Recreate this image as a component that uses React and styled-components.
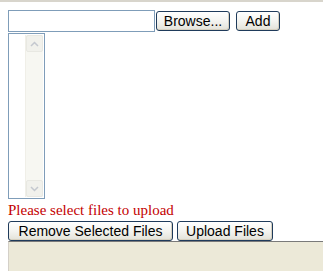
import * as React from 'react';
import styled, { createGlobalStyle } from 'styled-components';

const GlobalStyle = createGlobalStyle`
  html, body {
    margin: 0;
    padding: 0;
    background: #ffffff;
    overflow: hidden;
  }
  body {
    border-top: 2px solid #d8d5cc;
  }
`;

const Page = styled.div`
  padding: 8px 0 0 8px;
  font-family: "Liberation Sans", Arial, sans-serif;
`;

const PickRow = styled.div`
  display: flex;
  align-items: flex-start;
  height: 22px;
`;

const FileInput = styled.div`
  box-sizing: border-box;
  width: 147px;
  height: 22px;
  border: 1px solid #7f9db9;
  background: #fff;
`;

const XpButton = styled.button`
  box-sizing: border-box;
  height: 20px;
  width: ${(p) => p.$w}px;
  margin-left: ${(p) => p.$gap || 0}px;
  margin-top: 1px;
  padding: 0;
  border: 1px solid #1f3b5b;
  border-radius: 3px;
  background: linear-gradient(#ffffff 0%, #f4f4f0 50%, #e3e2d9 100%);
  box-shadow: inset -1px -1px 0 #d6d0c0;
  font-family: "Liberation Sans", Arial, sans-serif;
  font-size: 14px;
  color: #000;
  line-height: 17px;
  text-align: center;
  white-space: nowrap;
`;

const ListBox = styled.div`
  box-sizing: border-box;
  width: 37px;
  height: 166px;
  margin-top: 1px;
  border: 1px solid #7f9db9;
  display: flex;
  justify-content: flex-end;
  padding: 1px;
`;

const Scrollbar = styled.div`
  width: 17px;
  display: flex;
  flex-direction: column;
  background: #f7f7f2;
  border-left: 1px solid #f0efe8;
`;

const ArrowBox = styled.div`
  box-sizing: border-box;
  height: 17px;
  border: 1px solid #e8e8e2;
  border-radius: 2px;
  background: #f1f1ec;
  display: flex;
  align-items: center;
  justify-content: center;
`;

const Track = styled.div`
  flex: 1;
`;

const ErrorText = styled.div`
  font-family: "Liberation Serif", "Times New Roman", serif;
  font-size: 15px;
  color: #c40000;
  height: 18px;
  line-height: 16px;
  margin-top: 3px;
`;

const ActionRow = styled.div`
  display: flex;
  height: 21px;
`;

const Tray = styled.div`
  box-sizing: border-box;
  height: 40px;
  background: #ece9d8;
  border-top: 1px solid #7a7a7a;
  border-left: 1px solid #d4d0c8;
`;

function Arrow({ up }) {
  return (
    <svg width="9" height="6" viewBox="0 0 9 6">
      <path
        d={up ? 'M1 5 L4.5 1.5 L8 5' : 'M1 1 L4.5 4.5 L8 1'}
        fill="none"
        stroke="#c4c8cf"
        strokeWidth="1.5"
      />
    </svg>
  );
}

export default function App() {
  return (
    <Page>
      <GlobalStyle />
      <PickRow>
        <FileInput />
        <XpButton $w={74} $gap={1}>Browse...</XpButton>
        <XpButton $w={44} $gap={6}>Add</XpButton>
      </PickRow>
      <ListBox>
        <Scrollbar>
          <ArrowBox><Arrow up /></ArrowBox>
          <Track />
          <ArrowBox><Arrow /></ArrowBox>
        </Scrollbar>
      </ListBox>
      <ErrorText>Please select files to upload</ErrorText>
      <ActionRow>
        <XpButton $w={165}>Remove Selected Files</XpButton>
        <XpButton $w={96} $gap={4}>Upload Files</XpButton>
      </ActionRow>
      <Tray />
    </Page>
  );
}
